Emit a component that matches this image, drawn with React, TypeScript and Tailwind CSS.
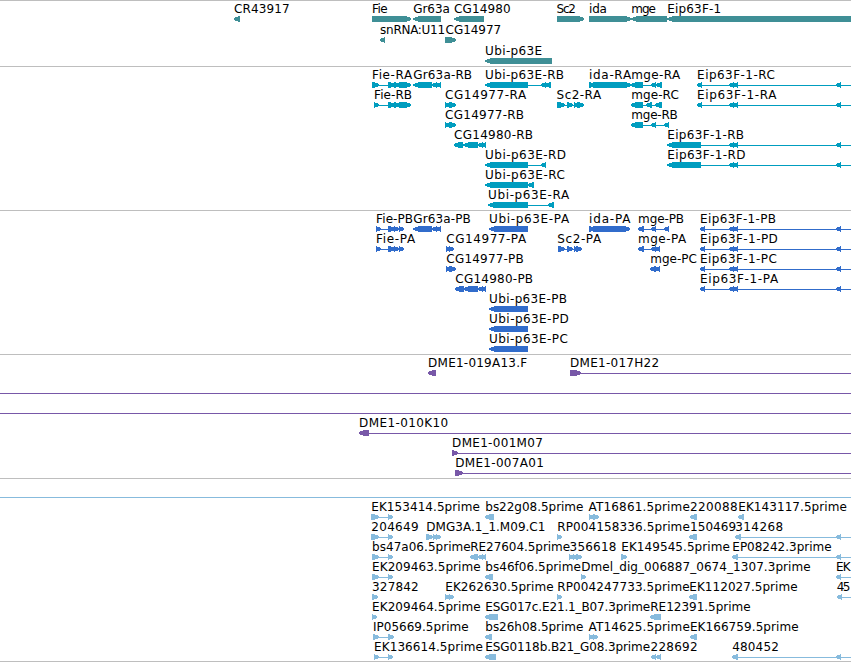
import React from "react";

type Exon = [number, number];

interface Feature {
  name: string;
  // first and last pixel of the label
  label: [number, number];
  strand: 1 | -1;
  exons: Exon[];
  // feature goes on past the right edge of the view
  open?: boolean;
}

interface TrackData {
  color: string;
  height: number;
  pitch: number;
  // overview lines that span the whole view
  spans?: number[];
  first: number;
  rows: Feature[][];
}

const VIEW_WIDTH = 851;

const f = (
  name: string,
  from: number,
  to: number,
  strand: 1 | -1,
  exons: Exon[],
  open = false
): Feature => ({ name, label: [from, to], strand, exons, open });

const eipTail: Exon[] = [[729, 734], [733, 738], [836, 841]];
const cg80: Exon[] = [[463, 478], [478, 483], [482, 486]];
const gr63: Exon[] = [[413, 432], [432, 437], [436, 441]];
const estPair: Exon[] = [[372, 379], [388, 393]];

const TRACKS: TrackData[] = [
  {
    color: "#3f8f96",
    height: 66,
    pitch: 21,
    first: 13,
    rows: [
      [
        f("CR43917", 234.5, 289.5, -1, [[234, 240]]),
        f("Fie", 372.5, 387.5, 1, [[372, 411]]),
        f("Gr63a", 413.7, 449.7, -1, [[413, 441]]),
        f("CG14980", 454.5, 510.5, -1, [[454, 484]]),
        f("Sc2", 557, 575.7, 1, [[557, 584]]),
        f("ida", 589.5, 606.7, 1, [[589, 631]]),
        f("mge", 631.7, 655.7, -1, [[631, 667]]),
        f("Eip63F-1", 667.7, 721, -1, [[667, 860]]),
      ],
      [
        f("snRNA:U11", 380.5, 445, -1, [[380, 385]]),
        f("CG14977", 446, 501, 1, [[445, 456]]),
      ],
      [f("Ubi-p63E", 485.5, 542, -1, [[485, 552]])],
    ],
  },
  {
    color: "#009dbf",
    height: 144,
    pitch: 20,
    first: 13,
    rows: [
      [
        f("Fie-RA", 372.5, 412, 1, [[372, 379], [388, 395], [394, 400], [399, 411]]),
        f("Gr63a-RB", 413.7, 472, -1, gr63),
        f("Ubi-p63E-RB", 485.5, 564, -1, [[485, 528], [541, 546], [545, 551]]),
        f("ida-RA", 589.5, 631, 1, [[589, 595], [593, 631]]),
        f("mge-RA", 631.7, 680, -1, [[631, 643], [651, 656], [656, 662]]),
        f("Eip63F-1-RC", 697.5, 774.7, -1, [[697, 702], ...eipTail], true),
      ],
      [
        f("Fie-RB", 374.5, 412, 1, [[374, 379], [388, 395], [394, 400], [399, 411]]),
        f("CG14977-RA", 445.5, 526, 1, [[445, 450], [449, 456]]),
        f("Sc2-RA", 557, 601, 1, [[557, 565], [567, 573], [574, 579], [577, 584]]),
        f("mge-RC", 631.7, 678.7, -1, [[631, 643], [646, 652], [655, 662]]),
        f("Eip63F-1-RA", 697.5, 776.3, -1, [[697, 702], ...eipTail], true),
      ],
      [
        f("CG14977-RB", 445.5, 524, 1, [[445, 450], [449, 456]]),
        f("mge-RB", 631.7, 677.7, -1, [[631, 643], [651, 656], [664, 669]]),
      ],
      [
        f("CG14980-RB", 454.5, 533, -1, [[454, 463], ...cg80]),
        f("Eip63F-1-RB", 667.7, 744, -1, [[667, 701], ...eipTail], true),
      ],
      [
        f("Ubi-p63E-RD", 485.5, 566, -1, [[485, 528], [541, 546]]),
        f("Eip63F-1-RD", 667.7, 745.3, -1, [[667, 701], ...eipTail], true),
      ],
      [f("Ubi-p63E-RC", 485.5, 564.7, -1, [[485, 528], [528, 534]])],
      [f("Ubi-p63E-RA", 488.5, 569, -1, [[488, 528], [548, 554]])],
    ],
  },
  {
    color: "#316ccb",
    height: 144,
    pitch: 20,
    first: 13,
    rows: [
      [
        f("Fie-PB", 376.5, 413, 1, [[376, 381], [388, 395], [394, 399], [399, 404]]),
        f("Gr63a-PB", 413.7, 470.7, -1, gr63),
        f("Ubi-p63E-PA", 489.5, 569, -1, [[489, 528]]),
        f("ida-PA", 589.5, 630.3, 1, [[589, 595], [593, 630]]),
        f("mge-PB", 638.5, 684, -1, [[638, 644], [651, 656], [664, 669]]),
        f("Eip63F-1-PB", 700.5, 776, -1, [[700, 705], ...eipTail], true),
      ],
      [
        f("Fie-PA", 376.5, 415, 1, [[376, 381], [388, 395], [394, 399], [399, 404]]),
        f("CG14977-PA", 446.7, 526, 1, [[446, 450], [449, 454]]),
        f("Sc2-PA", 557.7, 601, 1, [[558, 565], [567, 573], [574, 578], [576, 582]]),
        f("mge-PA", 638.5, 686, -1, [[638, 644], [651, 656], [655, 660]]),
        f("Eip63F-1-PD", 700.5, 777.7, -1, [[700, 705], ...eipTail], true),
      ],
      [
        f("CG14977-PB", 446.7, 523.7, 1, [[446, 451], [449, 456]]),
        f("mge-PC", 650.7, 696.7, -1, [[650, 656], [655, 660]]),
        f("Eip63F-1-PC", 700.5, 776.7, -1, [[700, 705], ...eipTail], true),
      ],
      [
        f("CG14980-PB", 455.7, 533, -1, [[455, 464], ...cg80]),
        f("Eip63F-1-PA", 700.5, 778, -1, [[700, 705], ...eipTail], true),
      ],
      [f("Ubi-p63E-PB", 489.5, 567, -1, [[489, 528]])],
      [f("Ubi-p63E-PD", 489.5, 568.7, -1, [[489, 528]])],
      [f("Ubi-p63E-PC", 489.5, 567.7, -1, [[489, 528]])],
    ],
  },
  {
    color: "#7858a8",
    height: 124,
    pitch: 20,
    first: 13,
    spans: [39, 59],
    rows: [
      [
        f("DME1-019A13.F", 428.5, 527, -1, [[428, 436]]),
        f("DME1-017H22", 570.5, 659, 1, [[570, 581]], true),
      ],
      [],
      [],
      [f("DME1-010K10", 359.5, 448, -1, [[359, 369]], true)],
      [f("DME1-001M07", 452.5, 542.7, 1, [[452, 458]], true)],
      [f("DME1-007A01", 455.7, 543.7, 1, [[455, 463]], true)],
    ],
  },
  {
    color: "#87bbdd",
    height: 183,
    pitch: 20,
    first: 33,
    spans: [19],
    rows: [
      [
        f("EK153414.5prime", 371.7, 479.7, 1, [[371, 379], [388, 393]]),
        f("bs22g08.5prime", 485.7, 583.3, -1, [[485, 494]]),
        f("AT16861.5prime", 589, 689.7, 1, [[589, 594], [593, 599]]),
        f("220088", 690.5, 737.5, -1, [[690, 697]]),
        f("EK143117.5prime", 738.7, 846.7, -1, [[738, 744]]),
      ],
      [
        f("204649", 371.7, 418.5, 1, [[371, 379], [388, 393]]),
        f("DMG3A.1_1.M09.C1", 426.7, 545.3, 1, [[426, 433], [433, 438], [436, 441]]),
        f("RP004158336.5prime", 557.7, 689.7, 1, [[557, 562]]),
        f("150469", 690.5, 736, -1, [[689, 697]]),
        f("314268", 735.7, 783, -1, [[735, 741], [836, 841]], true),
      ],
      [
        f("bs47a06.5prime", 372.5, 470.5, 1, estPair),
        f("RE27604.5prime", 470.7, 570, -1, [[470, 478], [478, 483], [482, 486]]),
        f("356618", 570, 616.3, 1, [[569, 574], [573, 578], [576, 582]]),
        f("EK149545.5prime", 621.7, 729.7, 1, [[621, 627]]),
        f("EP08242.3prime", 732.7, 831.5, -1, [[732, 738], [836, 841]], true),
      ],
      [
        f("EK209463.5prime", 372.5, 480.5, 1, estPair),
        f("bs46f06.5prime", 485.7, 580.7, -1, [[485, 493]]),
        f("Dmel_dig_006887_0674_1307.3prime", 581.7, 810.5, 1, [[581, 586]]),
        f("EK", 836.4, 850.4, -1, [[836, 841]], true),
      ],
      [
        f("327842", 372.5, 418.5, 1, [[372, 378]]),
        f("EK262630.5prime", 445.7, 553.5, 1, [[445, 450], [449, 454]]),
        f("RP004247733.5prime", 557.7, 689.5, 1, [[557, 562]]),
        f("EK112027.5prime", 689.7, 797.5, -1, [[689, 697]]),
        f("45", 837.2, 850.4, -1, [[837, 842]], true),
      ],
      [
        f("EK209464.5prime", 372.5, 480.5, 1, [[372, 377]]),
        f("ESG017c.E21.1_B07.3prime", 485.7, 650, -1, [[485, 498]]),
        f("RE12391.5prime", 650.7, 750.5, -1, [[650, 661]]),
      ],
      [
        f("IP05669.5prime", 373.3, 468.5, 1, [[373, 379], [388, 394]]),
        f("bs26h08.5prime", 485.7, 583.3, -1, [[485, 492]]),
        f("AT14625.5prime", 589, 689.7, 1, [[589, 594], [593, 598]]),
        f("EK166759.5prime", 690.3, 798.5, -1, [[690, 697]]),
      ],
      [
        f("EK136614.5prime", 374.5, 482.7, 1, [[374, 379], [388, 393]]),
        f("ESG0118b.B21_G08.3prime", 485.7, 650, -1, [[485, 496]]),
        f("228692", 651, 697.5, -1, [[651, 656], [656, 661]]),
        f("480452", 732.7, 778.7, -1, [[732, 738], [836, 841]], true),
      ],
    ],
  },
];

const arrow = ([a, b]: Exon, strand: 1 | -1, y: number) => {
  const head = b - a > 14 ? 6 : Math.min(5, b - a);
  return strand === 1
    ? `${a},${y} ${b - head},${y} ${b},${y + 2} ${b},${y + 4} ${b - head},${y + 6} ${a},${y + 6}`
    : `${b},${y} ${a + head},${y} ${a},${y + 2} ${a},${y + 4} ${a + head},${y + 6} ${b},${y + 6}`;
};

const FeatureGlyph = ({ feature, baseline }: { feature: Feature; baseline: number }) => {
  const { name, label, strand, exons, open } = feature;
  const start = exons[0][0] + 1;
  const end = open ? VIEW_WIDTH : exons[exons.length - 1][1] - 1;
  return (
    <g>
      {(exons.length > 1 || open) && (
        <rect x={start} y={baseline + 6} width={end - start} height={1} />
      )}
      {exons.map((exon, i) => (
        <polygon key={i} points={arrow(exon, strand, baseline + 3)} />
      ))}
      <text
        x={label[0] - 0.4}
        y={baseline}
        textLength={label[1] - label[0] + 0.5}
        className="fill-black font-['DejaVu_Sans',sans-serif] text-[12px]"
      >
        {name}
      </text>
    </g>
  );
};

const Track = ({ track }: { track: TrackData }) => (
  <section className="w-full border-t border-[#bebebe]">
    <svg
      className="-mt-px block w-full overflow-hidden"
      height={track.height}
      fill={track.color}
      shapeRendering="crispEdges"
    >
      <rect width={VIEW_WIDTH} height={1} fill="#bebebe" />
      {track.spans?.map((y) => (
        <rect key={y} y={y} width={VIEW_WIDTH} height={1} />
      ))}
      {track.rows.map((row, i) =>
        row.map((feature) => (
          <FeatureGlyph
            key={feature.name}
            feature={feature}
            baseline={track.first + i * track.pitch}
          />
        ))
      )}
    </svg>
  </section>
);

const App = () => {
  return (
    <main className="flex h-[662px] w-[851px] flex-col overflow-hidden bg-white">
      {TRACKS.map((track) => (
        <Track key={track.color} track={track} />
      ))}
      <div className="h-px w-full bg-[#bebebe]" />
    </main>
  );
};

export default App;
